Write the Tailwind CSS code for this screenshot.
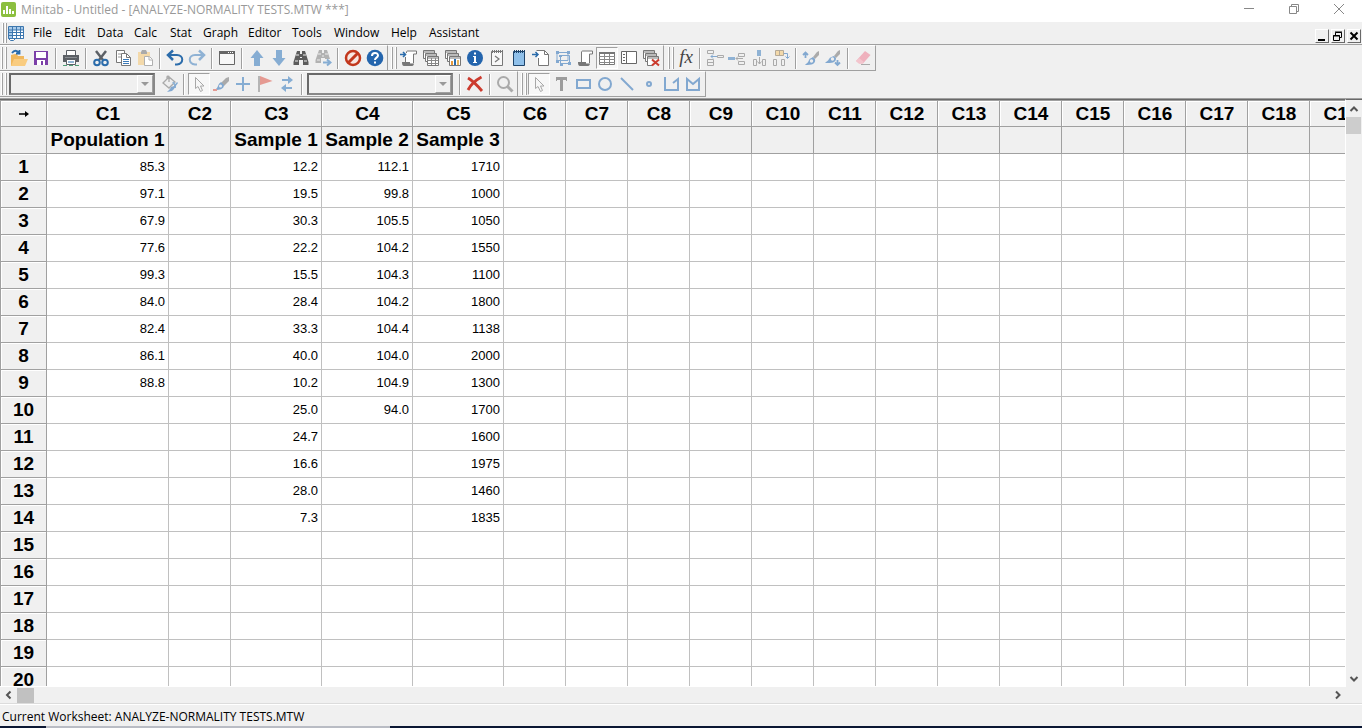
<!DOCTYPE html>
<html lang="en">
<head>
<meta charset="utf-8">
<meta name="viewport" content="width=device-width, initial-scale=1">
<title>Minitab - Untitled</title>
<script src="https://cdn.jsdelivr.net/npm/@tailwindcss/browser@4"></script>
</head>
<body class="flex h-screen flex-col overflow-hidden bg-[#f0f0f0] font-['Open_Sans','Noto_Sans',sans-serif] text-[12px] leading-4 text-black">

<!-- Title bar -->
<header class="flex h-[22px] shrink-0 items-start bg-white">
  <svg class="mt-[2px] ml-px size-[15px] shrink-0" viewBox="0 0 15 15" aria-hidden="true"><rect width="15" height="15" rx="2" fill="#8cbf3f"/><path d="M2 8h2v4H2zM5 4h2v8H5zM8 7h2v5H8zM11 9h2v3h-2z" fill="#fff"/></svg>
  <h1 class="ml-[5px] mt-[2px] grow whitespace-nowrap text-[#999]">Minitab - Untitled - [ANALYZE-NORMALITY TESTS.MTW ***]</h1>
  <div class="flex h-[17px] text-[#888]">
    <button type="button" aria-label="Minimize window" class="flex w-[45px] items-center justify-center"><svg class="size-[12px]" viewBox="0 0 12 12" fill="none" stroke="currentColor"><path d="M1 5.500h10"/></svg></button>
    <button type="button" aria-label="Restore window" class="flex w-[45px] items-center justify-center"><svg class="size-[12px]" viewBox="0 0 12 12" fill="none" stroke="currentColor"><path d="M1.500 3.500h7v7h-7zM3.500 3.500v-2h7v7h-2"/></svg></button>
    <button type="button" aria-label="Close window" class="flex w-[46px] items-center justify-center"><svg class="size-[12px]" viewBox="0 0 12 12" fill="none" stroke="currentColor"><path d="M1 1l10 10M11 1L1 11"/></svg></button>
  </div>
</header>

<!-- Menu bar -->
<nav aria-label="Main menu" class="flex h-[22px] shrink-0 items-center">
  <span class="ml-[2px] flex h-[20px] gap-px"><i class="w-[2px] border-r border-[#a0a0a0] bg-white"></i><i class="w-[2px] border-r border-[#a0a0a0] bg-white"></i></span>
  <svg class="ml-px mr-[9px] size-[16px] shrink-0" viewBox="0 0 16 16" aria-hidden="true"><path d="M.5 1.500h15v12h-8l-2 2h-3l-2-2z" fill="#fff" stroke="#3d77ae"/><path d="M1 2h14v3H1zM1 5h3v8H1z" fill="#a9cbea"/><path d="M.5 5h15M.5 7.500h15M.5 10.500h15M4.500 2v11M8.500 2v11M12.500 2v11M.5 13.500h15" stroke="#3d77ae" fill="none"/></svg>
  <button type="button" class="w-[31px] text-left">File</button>
  <button type="button" class="w-[33px] text-left">Edit</button>
  <button type="button" class="w-[37px] text-left">Data</button>
  <button type="button" class="w-[36px] text-left">Calc</button>
  <button type="button" class="w-[33px] text-left">Stat</button>
  <button type="button" class="w-[45px] text-left">Graph</button>
  <button type="button" class="w-[44px] text-left">Editor</button>
  <button type="button" class="w-[42px] text-left">Tools</button>
  <button type="button" class="w-[57px] text-left">Window</button>
  <button type="button" class="w-[38px] text-left">Help</button>
  <button type="button" class="text-left">Assistant</button>
  <div class="mt-[5px] mr-px ml-auto flex gap-[2px]">
    <button type="button" aria-label="Minimize worksheet" class="size-[14px] border border-r-[#696969] border-b-[#696969] border-t-white border-l-white"><svg class="size-[12px]" viewBox="0 0 12 12"><path d="M2 9h7v2H2z"/></svg></button>
    <button type="button" aria-label="Restore worksheet" class="size-[14px] border border-r-[#696969] border-b-[#696969] border-t-white border-l-white"><svg class="size-[12px]" viewBox="0 0 12 12" fill="none" stroke="#000"><path d="M1.500 5.500h6v5h-6zM1 6h7M3.500 5V2.500h6v5H8M3 2h7"/></svg></button>
    <button type="button" aria-label="Close worksheet" class="size-[14px] border border-r-[#696969] border-b-[#696969] border-t-white border-l-white"><svg class="size-[12px]" viewBox="0 0 12 12" fill="none" stroke="#000" stroke-width="2"><path d="M2.500 2.500l7 7M9.500 2.500l-7 7"/></svg></button>
  </div>
</nav>

<!-- Toolbars: groups are filled from the lists in the script -->
<section aria-label="Toolbars" class="h-[54px] shrink-0 border-t border-[#a0a0a0]">
  <div id="row1" class="flex h-[26px]"></div>
  <div id="row2" class="flex h-[26px]"></div>
</section>

<!-- Worksheet -->
<main class="grid min-h-0 grow grid-cols-[minmax(0,1fr)_16px] grid-rows-[minmax(0,1fr)_16px] border-t border-[#a0a0a0]">
  <div class="overflow-hidden border-t border-r border-b border-t-[#696969] border-r-white border-b-white bg-white">
    <table id="sheet" class="w-max table-fixed border-separate border-spacing-0 border-t border-l border-[#a0a0a0] font-['Liberation_Sans',Arial,sans-serif]"></table>
  </div>
  <div class="flex flex-col items-center border-t border-[#696969]">
    <button type="button" aria-label="Scroll up" class="flex h-[17px] w-full items-center justify-center"><svg class="size-[10px]" viewBox="0 0 10 10" fill="none" stroke="#555" stroke-width="2"><path d="M1.500 7L5 3.500 8.500 7"/></svg></button>
    <div class="h-[17px] w-full border-r border-[#f0f0f0] bg-[#cdcdcd]"></div>
    <button type="button" aria-label="Scroll down" class="mt-auto flex h-[17px] w-full items-center justify-center"><svg class="size-[10px]" viewBox="0 0 10 10" fill="none" stroke="#555" stroke-width="2"><path d="M1.500 3L5 6.500 8.500 3"/></svg></button>
  </div>
  <div class="flex items-center">
    <button type="button" aria-label="Scroll left" class="flex h-full w-[17px] items-center justify-center"><svg class="size-[10px]" viewBox="0 0 10 10" fill="none" stroke="#555" stroke-width="2"><path d="M6.500 1.500L3 5l3.500 3.500"/></svg></button>
    <div class="h-[15px] w-[17px] bg-[#c1c1c1]"></div>
    <button type="button" aria-label="Scroll right" class="ml-auto flex h-full w-[17px] items-center justify-center"><svg class="size-[10px]" viewBox="0 0 10 10" fill="none" stroke="#555" stroke-width="2"><path d="M3 1.500L6.500 5 3 8.500"/></svg></button>
  </div>
  <div></div>
</main>

<!-- Status bar -->
<footer class="shrink-0">
  <div class="h-[23px] border-t border-[#dcdcdc]"><p class="h-[22px] border-t border-white pt-[4px] pl-[2px]">Current Worksheet: ANALYZE-NORMALITY TESTS.MTW</p></div>
  <div class="h-[2px] bg-[#0b1733]"><div class="ml-[46px] h-[2px] w-[344px] bg-[#b9bcc4]"></div></div>
</footer>

<script>
const STACK = '<g fill="#fff" stroke="#777"><path d="M1.500 1.500h11v8h-11z"/><path d="M1 3h12"/><path d="M3.500 4.500h11v8h-11z"/><path d="M3 6h12"/><path d="M5.500 7.500h11v9h-11z"/><path d="M5 9h12"/></g>';
const ICONS = {
  open: '<path d="M1 6V17h13V7H8L7 5H5z" fill="#f0b75c"/><path d="M1 17l3-7h14l-3 7z" fill="#f9cc80"/><path d="M2 4c2-3 5-3 7 0M9.500 1v3.500H6" fill="none" stroke="#2b6cab" stroke-width="1.800"/>',
  save: '<path d="M2 2h14v14H2z" fill="#7b3fa8"/><path d="M4 3h10v6H4z" fill="#fff"/><path d="M5 11h8v5H5z" fill="#fff"/><path d="M9 12h2v4H9z" fill="#7b3fa8"/>',
  print: '<path d="M4.500 1.500h9v5h-9z" fill="#fff" stroke="#5c6066"/><path d="M1 6h16v7H1z" fill="#5c6066"/><path d="M3 8.500h12" stroke="#8a8e93"/><path d="M4.500 10.500h9v5h-9z" fill="#fff" stroke="#5c6066"/><path d="M6 13h6" stroke="#2b6cab"/><path d="M1 16.500h16" stroke="#4f9d77" stroke-dasharray="4 2"/>',
  cut: '<path d="M4 2l7 9M14 2l-7 9" stroke="#5c6066" stroke-width="2.500"/><g fill="none" stroke="#2b6cab" stroke-width="2"><circle cx="5" cy="13.500" r="2.800"/><circle cx="13" cy="13.500" r="2.800"/></g>',
  copy: '<path d="M2.500 1.500h8v12h-8z" fill="#fff" stroke="#777"/><path d="M4 5h3M4 8h3" stroke="#999"/><path d="M7.500 4.500h5l4 4v8h-9z" fill="#fff" stroke="#777"/><path d="M12.500 5v3.500h4" fill="none" stroke="#777"/><path d="M9 10.500h6M9 12.500h6M9 14.500h6" stroke="#3b7ab8"/>',
  paste: '<path d="M2 3h12v13H2z" fill="#f3d9aa"/><path d="M5 3l1-2h4l1 2v2H5z" fill="#aaa"/><path d="M8.500 7.500h5l3 3v6h-8z" fill="#fff" stroke="#b0b0b0"/><path d="M13 8v3h3" fill="none" stroke="#b0b0b0"/>',
  undo: '<path d="M2 6h9c7 0 7 9 0 9.500H9" fill="none" stroke="#2b6cab" stroke-width="2"/><path d="M7 1.500L2 6l5 5" fill="none" stroke="#2b6cab" stroke-width="2.500"/>',
  redo: '<path d="M16 6H7c-7 0-7 9 0 9.500h2" fill="none" stroke="#8fb2d4" stroke-width="2"/><path d="M11 1.500L16 6l-5 5" fill="none" stroke="#8fb2d4" stroke-width="2.500"/>',
  win: '<path d="M1.500 2.500h15v13h-15z" fill="#f7f7f7" stroke="#666"/><path d="M1 2h16v3H1z" fill="#666"/><path d="M10 3.500h6" stroke="#fff" stroke-dasharray="1 1"/>',
  up: '<path d="M9 1l6.500 8H12v8H6V9H2.500z" fill="#86add3"/>',
  down: '<path d="M9 17l6.500-8H12V1H6v8H2.500z" fill="#86add3"/>',
  find: '<path d="M5 2h3v3l2 0V2h3l1 3 2.500 8v3H11v-5H7v5H1.500v-3L4 5z" fill="#5c5c5c"/><path d="M4 6h3M11 6h3M3 12h3M12 12h3M8 8.500h2" stroke="#eee"/>',
  findNext: '<path d="M5 1h3v3h2V1h3l1 3 2 6H11V9H7v5H1.500v-3L4 4z" fill="#b2b2b2"/><path d="M4 5h3M11 5h3M3 11h3M8 7h2" stroke="#eee"/><path d="M9 13.500h6M13 10.500l3.500 3-3.500 3" fill="none" stroke="#86add3" stroke-width="2"/>',
  ban: '<circle cx="9" cy="9" r="7" fill="#f7e6e0" stroke="#c2371c" stroke-width="2.500"/><path d="M4 14L14 4" stroke="#c2371c" stroke-width="3"/>',
  help: '<circle cx="9" cy="9" r="8.300" fill="#2465ad"/><path d="M6 7c0-4 6-4 6-.5 0 2.200-3 2-3 4.500" fill="none" stroke="#fff" stroke-width="2"/><path d="M8 12.500h2v2H8z" fill="#fff"/>',
  scroll: '<path d="M6.500 3.500c0-1 .5-1.500 1.500-1.500h8.500v3h-3v9h-8v-6z" fill="#fff"/><path d="M5.500 8v5.500M6.500 4V3c0-.5.500-1 1-1h9v3h-3v9" fill="none" stroke="#777"/><path d="M2 13h8v1.500h4V14c0 1.500-.5 3-2 3H4c-1.500 0-2-1.500-2-4z" fill="#777"/><path d="M0 5.500h5M3 3l2.500 2.500L3 8" fill="none" stroke="#2b6cab" stroke-width="1.500"/>',
  sheets: STACK + '<path d="M5.500 11.500h11M5.500 14.500h11M9.500 9v7M13.500 9v7" stroke="#888"/>',
  graphs: STACK + '<path d="M7 12h2v4H7z" fill="#e79a3c"/><path d="M10 10h2v6h-2z" fill="#2b6cab"/><path d="M13 11h2v5h-2z" fill="#e7b45c"/>',
  info: '<circle cx="9" cy="9" r="8" fill="#2465ad"/><path d="M8 3.500h2v2H8zM7 7h3v6h1v1H7v-1h1V8H7z" fill="#fff"/>',
  session: '<path d="M3.500 2.500h11v14h-11z" fill="#f8f8f8" stroke="#777"/><path d="M4 2.500h11" stroke="#777" stroke-width="3" stroke-dasharray="1 1"/><path d="M7 7l4 3-4 3" fill="none" stroke="#777" stroke-width="1.200"/>',
  notepad: '<path d="M3.500 2.500h11v14h-11z" fill="#8fc0ea" stroke="#1e446b"/><path d="M4 2.500h11" stroke="#1e446b" stroke-width="3" stroke-dasharray="1 1"/>',
  docIn: '<path d="M4.500 1.500h8l4 4v11h-11V8" fill="#fff"/><path d="M4.500 1.500h8l4 4v11h-10V9M12.500 1.500v4h4" fill="none" stroke="#777"/><path d="M0 5.500h6M3.500 3L6 5.500 3.500 8" fill="none" stroke="#2b6cab" stroke-width="1.500"/>',
  group: '<g fill="none" stroke="#82a8d0"><path d="M3 3.500h11v8H3zM6.500 6.500h9v8h-9z"/></g><path d="M2 2h3v3H2zM13 2h3v3h-3zM2 11h3v3H2zM6 14h3v3H6zM14 13h3v3h-3zM5 6h3v2H5z" fill="#82a8d0"/>',
  script: '<path d="M5 2h11.500v3h-3v9H5z" fill="#fff"/><path d="M5.500 13V3c0-.5.500-1 1-1h10v3h-3v9" fill="none" stroke="#777"/><path d="M2 13h8v1.500h4V14c0 1.500-.5 3-2 3H4c-1.500 0-2-1.500-2-4z" fill="#777"/>',
  table: '<path d="M1.500 3.500h15v12h-15z" fill="#fff" stroke="#777"/><path d="M1 3h16v2H1z" fill="#777"/><path d="M1 7.500h16M1 10.500h16M1 13.500h16M6.500 5v10M11.500 5v10" stroke="#888"/>',
  panel: '<path d="M1.500 2.500h15v12h-15z" fill="#fff" stroke="#666"/><path d="M6.500 2v12M3 5.500h2M3 8.500h2M3 11.500h2" stroke="#666"/>',
  closeAll: STACK + '<path d="M10 10h8v7h-8z" fill="#f0f0f0"/><path d="M10 10.500l7 6M17 10.500l-7 6" stroke="#cc3b2e" stroke-width="2"/>',
  insCell: '<g fill="none" stroke="#aaa"><path d="M1.500 1.500h6v3h-6zM1.500 10.500h6v6h-6zM1.500 13.500h6M11.500 6.500h6v2h-6z"/></g><path d="M5 7.500h6M7 5.500l-2 2 2 2" fill="none" stroke="#82a8d0"/>',
  insRow: '<path d="M0 8h7v3H0z" fill="#8fb2d4"/><g fill="none" stroke="#aaa"><path d="M10.500 4.500h6v3h-6zM10.500 12.500h6v3h-6z"/></g><path d="M8 9.500h7M10 7.500l-2 2 2 2" fill="none" stroke="#aaa"/>',
  insCol: '<path d="M7 1h4v6H7z" fill="#8fb2d4"/><g fill="none" stroke="#aaa"><path d="M3.500 10.500h3v6h-3zM12.500 10.500h3v6h-3z"/></g><path d="M9.500 8v7M7.500 12.500l2 2.500 2-2.500" fill="none" stroke="#aaa"/>',
  moveCol: '<path d="M3.500 1.500h8v5h-8zM7.500 1v5" fill="#f3d9aa" stroke="#b5aa98"/><path d="M1.500 10.500h3v6h-3zM9.500 10.500h3v6h-3z" fill="none" stroke="#aaa"/><path d="M12 4.500h3.500V9M13.500 7.500l2 2 2-2" fill="none" stroke="#82a8d0"/>',
  brushUp: '<path d="M17 2v4l-4 4-2-2 4-5z" fill="#aaa"/><path d="M11 8l2 2c1 5-3 6-10 6 2-2 3-2 4-5 1-2 3-2 4-3z" fill="#82a8d0"/><circle cx="9.500" cy="12" r="1.700" fill="#eee"/><path d="M3.500 9V4M1 6l2.500-2.500L6 6" fill="none" stroke="#82a8d0" stroke-width="1.800"/>',
  brushDown: '<path d="M16 1v4l-4 4-2-2 4-5z" fill="#aaa"/><path d="M10 7l2 2c0 5-4 5-11 5 2-2 3-2 4-4 1-2 3-2 5-3z" fill="#82a8d0"/><circle cx="8.500" cy="10" r="1.700" fill="#eee"/><path d="M13.500 11v5M11 13.500l2.500 2.500 2.500-2.500" fill="none" stroke="#82a8d0" stroke-width="1.800"/>',
  eraser: '<path d="M11 2l5.500 4L9 14.500H5L2 12z" fill="#efb1bd"/><path d="M5 9l5 4-1.500 1.500H5L2 12z" fill="#f3c5cd"/><path d="M7 15.500h9" stroke="#aaa"/>',
  bucket: '<path d="M8 2L2 8l6 5 6-6zM6 5V2c0-1 2-1 2 0v5" fill="#eee" stroke="#aaa" stroke-width="1.300"/><path d="M12 7l2 3v3" stroke="#8fb2d4" stroke-width="2" fill="none"/><path d="M17 8l-3 4-1 2-2 2-5 1 3-3 1-2 3-1 3-4z" fill="#82a8d0"/>',
  pointer: '<path d="M5.500 2.500v11l2.500-2 2.500 5 2-1-2-4.500h3.500z" fill="#f7f7f7" stroke="#a8a8a8"/>',
  brush: '<path d="M17 2v4l-5 5-3-3 5-5z" fill="#aaa"/><path d="M9 7l3 3c0 4-4 5-9 5 2-2 2-2 3-4 1-3 2-3 3-4z" fill="#82a8d0"/><circle cx="8.500" cy="11" r="1.500" fill="#eee"/><path d="M1 14h4v2H1z" fill="#e39a93"/>',
  plus: '<path d="M2 9h14M9 2v14" stroke="#86add3" stroke-width="2"/>',
  flag: '<path d="M3 1v16" stroke="#b5b5b5" stroke-width="2"/><path d="M4 1l12.500 5L4 10z" fill="#e59a92"/>',
  swap: '<path d="M4 5h8M14 13H6" stroke="#86add3" stroke-width="2"/><path d="M10 1l5 4-5 4zM8 9l-5 4 5 4z" fill="#86add3"/>',
  del: '<path d="M2 3c5 3 9 7 14 13M15.500 2C10 5 5 9 2 15" fill="none" stroke="#cc3b2e" stroke-width="2.800"/>',
  zoom: '<circle cx="7.500" cy="7.500" r="5.500" fill="#f0f0f0" stroke="#aaa" stroke-width="2"/><path d="M11.500 11.500l5 5" stroke="#aaa" stroke-width="3"/>',
  text: '<path d="M4 2h11v4h-1V5h-3v11H8V5H5v1H4z" fill="#9c9c9c"/>',
  rect: '<path d="M3 5h13v8H3z" fill="none" stroke="#82a8d0" stroke-width="2"/>',
  circle: '<circle cx="9" cy="9" r="6" fill="none" stroke="#82a8d0" stroke-width="2"/>',
  line: '<path d="M3 3l12 12" stroke="#82a8d0" stroke-width="2"/>',
  dot: '<circle cx="9" cy="9" r="2" fill="none" stroke="#82a8d0" stroke-width="2"/>',
  polyline: '<path d="M3 2v13h13V4l-5 4" fill="none" stroke="#82a8d0" stroke-width="2"/>',
  polygon: '<path d="M3 15V4l6 5 6-5v11z" fill="none" stroke="#82a8d0" stroke-width="2"/>',
};

const btn = ([icon, label, pressed]) => `<button type="button" aria-label="${label}" title="${label}" class="${pressed
  ? 'flex h-[22px] w-[22px] items-center justify-center border border-t-[#a0a0a0] border-l-[#a0a0a0] border-r-white border-b-white bg-[#f8f8f8]'
  : 'flex h-[22px] w-[22px] items-center justify-center'}"><svg class="size-[18px] shrink-0" viewBox="0 0 18 18" aria-hidden="true">${ICONS[icon]}</svg></button>`;
const fx = `<button type="button" aria-label="Assign formula" class="flex h-[22px] w-[22px] items-center justify-center pb-[2px] font-['Liberation_Serif',serif] text-[19px] leading-[20px] text-[#444] italic">fx</button>`;
const sep = '<i class="mx-[3px] h-[21px] w-[2px] border-l border-r-white border-r border-l-[#a0a0a0]"></i>';
const narrowSep = '<i class="mr-[3px] ml-[2px] h-[21px] w-[2px] border-l border-r-white border-r border-l-[#a0a0a0]"></i>';
const combo = label => `<span class="relative mx-px flex h-[22px] w-[146px] border-2 border-t-[#696969] border-l-[#696969] border-r-[#888] border-b-[#888]"><select aria-label="${label}" class="w-full appearance-none bg-[#f0f0f0] outline-none"><option></option></select><i class="pointer-events-none absolute top-0 right-0 flex h-[18px] w-[16px] items-center justify-center border border-t-white border-l-white border-r-[#a0a0a0] border-b-[#a0a0a0]"><svg class="size-[8px]" viewBox="0 0 8 8"><path d="M0 2h8L4 6z" fill="#999"/></svg></i></span>`;
const grip = '<i class="h-[22px] w-[2px] border-r border-[#a0a0a0] bg-white"></i>';
const group = (lead, items) => `<div role="toolbar" class="flex items-center border-t border-r border-b border-t-white border-r-[#a0a0a0] border-b-[#a0a0a0] pr-px">
  <span class="${lead}">${grip}${grip}</span>${items.map(i => Array.isArray(i) ? btn(i) : i).join('')}</div>`;

document.getElementById('row1').innerHTML =
  group('flex w-[8px] gap-[2px] pl-px', [['open','Open'],['save','Save'],sep,['print','Print'],sep,['cut','Cut'],['copy','Copy'],['paste','Paste'],sep,['undo','Undo'],['redo','Redo'],sep,['win','Edit last dialog'],sep,['up','Previous'],['down','Next'],['find','Find'],['findNext','Find next'],sep,['ban','Cancel'],['help','Help']]) +
  group('flex w-[10px] gap-[2px] pl-[3px]', [['scroll','Show session'],['sheets','Worksheets'],['graphs','Graphs'],['info','Info'],['session','Session window'],['notepad','Report pad'],['docIn','Related documents'],['group','Design'],['script','History'],['table','Current data window',1],['panel','Project manager'],['closeAll','Close all graphs']]) +
  group('flex w-[11px] gap-[2px] pl-[4px]', [fx,narrowSep,['insCell','Insert cells'],['insRow','Insert row'],['insCol','Insert column'],['moveCol','Move columns'],sep,['brushUp','Previous brushed row'],['brushDown','Next brushed row'],sep,['eraser','Clear cells']]);
document.getElementById('row2').innerHTML =
  group('flex w-[8px] gap-[2px] pl-px', [combo('Graph item'),'<i class="w-[3px]"></i>',['bucket','Edit attributes'],narrowSep,['pointer','Select',1],['brush','Brush'],['plus','Crosshairs'],['flag','Plant flag'],['swap','Swap'],sep,combo('Section'),'<i class="w-[2px]"></i>',sep,['del','Delete'],sep,['zoom','Zoom']]) +
  group('flex w-[10px] gap-[2px] pl-[3px]', [['pointer','Select annotation',1],['text','Text'],['rect','Rectangle'],['circle','Ellipse'],['line','Line'],['dot','Marker'],['polyline','Polyline'],['polygon','Polygon']]);

const names = {1:'Population 1', 3:'Sample 1', 4:'Sample 2', 5:'Sample 3'};
const widths = {1:122, 3:91, 4:91, 5:91};
const data = {
  1:'85.3 97.1 67.9 77.6 99.3 84.0 82.4 86.1 88.8'.split(' '),
  3:'12.2 19.5 30.3 22.2 15.5 28.4 33.3 40.0 10.2 25.0 24.7 16.6 28.0 7.3'.split(' '),
  4:'112.1 99.8 105.5 104.2 104.3 104.2 104.4 104.0 104.9 94.0'.split(' '),
  5:'1710 1000 1050 1550 1100 1800 1138 2000 1300 1700 1600 1975 1460 1835'.split(' '),
};
const head = 'h-[27px] border-r border-b border-[#a0a0a0] bg-[#f0f0f0] p-0 text-center text-[19px] leading-[22px] font-bold whitespace-nowrap shadow-[inset_1px_1px_0_#fff]';
const top1 = 'h-[26px] border-r border-b border-[#a0a0a0] bg-[#f0f0f0] p-0 pl-px text-center text-[19px] leading-[22px] font-bold whitespace-nowrap shadow-[inset_1px_1px_0_#fff]';
const name = 'h-[27px] border-r border-b border-[#a0a0a0] bg-[#f0f0f0] p-0 text-center text-[19px] leading-[22px] font-bold whitespace-nowrap';
const cell = 'h-[27px] border-r border-b border-[#c0c0c0] p-0 pr-[3px] pb-px text-right text-[13px] leading-[18px]';

// Fill the window with as many rows and columns as fit: the bars take 142px of
// height, the two header rows 54px, the named columns 504px of width.
function drawSheet() {
  const rows = Math.max(14, Math.ceil((innerHeight - 142 - 54) / 27));
  const count = Math.max(5, 5 + Math.ceil((innerWidth - 17 - 504) / 62));
  const cols = Array.from({length: count}, (_, i) => i + 1);
  document.getElementById('sheet').innerHTML =
    `<colgroup><col style="width:46px">${cols.map(c => `<col style="width:${widths[c] || 62}px">`).join('')}</colgroup>
    <thead><tr><th class="${top1}"><svg class="mx-auto size-[12px]" viewBox="0 0 12 12" role="img" aria-label="Entry direction"><path d="M1 6h7" stroke="#000" stroke-width="1.500"/><path d="M7 3l4 3-4 3z"/></svg></th>${cols.map(c => `<th scope="col" class="${top1}">C${c}</th>`).join('')}</tr>
    <tr><td class="${name}"></td>${cols.map(c => `<th class="${name}">${names[c] || ''}</th>`).join('')}</tr></thead>
    <tbody>${Array.from({length: rows}, (_, r) => `<tr><th scope="row" class="${head}">${r + 1}</th>${cols.map(c => `<td class="${cell}">${data[c]?.[r] ?? ''}</td>`).join('')}</tr>`).join('')}</tbody>`;
}
drawSheet();
addEventListener('resize', drawSheet);
</script>
</body>
</html>
